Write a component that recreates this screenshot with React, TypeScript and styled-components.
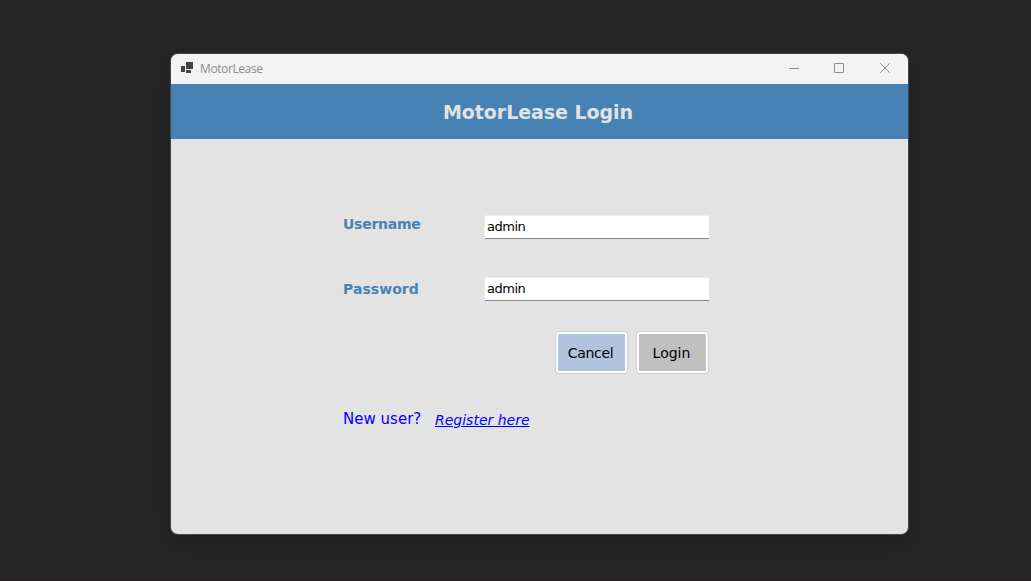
import React from "react";
import styled, { createGlobalStyle } from "styled-components";

const GlobalStyle = createGlobalStyle`
  * { box-sizing: border-box; }
  body {
    margin: 0;
    background: #262626;
    font-family: "DejaVu Sans", Verdana, sans-serif;
  }
`;

const Desktop = styled.div`
  height: 581px;
  padding: 54px 0 0 171px;
  overflow: hidden;
  border-bottom: 1px solid #231e1f;
`;

const Window = styled.main`
  display: flex;
  flex-direction: column;
  width: 737px;
  height: 480px;
  border-radius: 7px;
  overflow: hidden;
  background: #e3e3e3;
  box-shadow: 0 0 0 1px #454746, 0 8px 28px 2px rgba(0, 0, 0, 0.2);
`;

const TitleBar = styled.header`
  display: flex;
  align-items: center;
  height: 30px;
  padding-left: 10px;
  background: #f3f3f3;
`;

const AppIcon = styled.svg`
  width: 12px;
  height: 11px;
  margin: -3px 7px 0 0;
`;

const WindowName = styled.span`
  flex: 1;
  font: 12px/16px "Open Sans", "Noto Sans", sans-serif;
  letter-spacing: -0.4px;
  color: #8c8c8c;
`;

const Controls = styled.div`
  display: flex;
`;

const Control = styled.button`
  display: flex;
  align-items: center;
  justify-content: center;
  width: 46px;
  height: 28px;
  padding: 0;
  border: 0;
  background: none;
`;

const Glyph = styled.svg`
  width: 10px;
  height: 10px;
  margin-top: -2px;
  overflow: visible;
  fill: none;
  stroke: #8c8c8c;
`;

const Banner = styled.div`
  height: 55px;
  background: #4682b4;
`;

const Heading = styled.h1`
  margin: 0;
  padding: 1px 0 0 272px;
  font-size: 19px;
  line-height: 55px;
  letter-spacing: -0.06px;
  color: #e2e2e2;
  white-space: nowrap;
`;

const Form = styled.form`
  display: flex;
  flex-direction: column;
  width: 538px;
  padding: 76px 0 0 172px;
`;

const Field = styled.div`
  display: flex;
  align-items: flex-start;
  height: 62px;
`;

const Label = styled.label<{ $drop: number; $tracking: number }>`
  width: 142px;
  padding-top: ${(p) => p.$drop}px;
  font-size: 14px;
  line-height: 18px;
  font-weight: bold;
  letter-spacing: ${(p) => p.$tracking}px;
  color: #4682b4;
`;

const Input = styled.input`
  width: 224px;
  height: 24px;
  margin: 0;
  padding: 0 2px 1px;
  border: 0;
  border-top: 1px solid #ececec;
  border-bottom: 1px solid #868686;
  box-shadow: -1px 0 0 #ececec;
  outline: none;
  background: #fff;
  font: 13px "DejaVu Sans", Tahoma, sans-serif;
  letter-spacing: -0.5px;
  color: #000;
`;

const Actions = styled.div`
  display: flex;
  justify-content: flex-end;
  gap: 10px;
  margin: -7px 1px 0 0;
`;

const ActionButton = styled.button<{ $fill: string; $tracking: number }>`
  width: 71px;
  height: 41px;
  padding: 0 2px 0 0;
  border: 2px solid #fdfdfd;
  border-radius: 3px;
  background: ${(p) => p.$fill};
  box-shadow: 0 0 0 1px #d2d2d2, 0 1px 0 0 #bdbdbd;
  font: 14px "DejaVu Sans", Verdana, sans-serif;
  letter-spacing: ${(p) => p.$tracking}px;
  color: #000;
`;

const SignUp = styled.div`
  display: flex;
  align-items: flex-start;
  gap: 14px;
  margin-top: 37px;
  font-size: 14px;
  line-height: 18px;
  color: #0000ff;
  white-space: nowrap;
`;

const Prompt = styled.span`
  width: 78px;
  font-size: 15px;
  letter-spacing: 0.02px;
`;

const RegisterLink = styled.a`
  padding-top: 1px;
  color: #0000ff;
  font-style: italic;
  text-decoration: underline;
`;

export default function App() {
  return (
    <>
      <GlobalStyle />
      <Desktop>
        <Window>
          <TitleBar>
            <AppIcon viewBox="0 0 12 11" fill="#434343" shapeRendering="crispEdges">
              <path d="M5 0h7v7H5zM0 4h4v6H0zM5 8h5v3H5z" />
            </AppIcon>
            <WindowName>MotorLease</WindowName>
            <Controls>
              <Control type="button" aria-label="Minimize">
                <Glyph viewBox="0 0 10 10"><path d="M1 5.5h10" /></Glyph>
              </Control>
              <Control type="button" aria-label="Maximize">
                <Glyph viewBox="0 0 10 10"><rect x=".5" y=".5" width="9" height="9" rx=".4" /></Glyph>
              </Control>
              <Control type="button" aria-label="Close">
                <Glyph viewBox="0 0 10 10"><path d="M.2.2l9.6 9.6M9.8.2L.2 9.8" /></Glyph>
              </Control>
            </Controls>
          </TitleBar>
          <Banner>
            <Heading>MotorLease Login</Heading>
          </Banner>
          <Form>
            <Field>
              <Label htmlFor="username" $drop={0} $tracking={-0.25}>Username</Label>
              <Input id="username" defaultValue="admin" />
            </Field>
            <Field>
              <Label htmlFor="password" $drop={3} $tracking={0.05}>Password</Label>
              <Input id="password" defaultValue="admin" />
            </Field>
            <Actions>
              <ActionButton type="button" $fill="#b0c4de" $tracking={-0.3}>Cancel</ActionButton>
              <ActionButton type="button" $fill="#c0c0c0" $tracking={0}>Login</ActionButton>
            </Actions>
            <SignUp>
              <Prompt>New user?</Prompt>
              <RegisterLink>Register here</RegisterLink>
            </SignUp>
          </Form>
        </Window>
      </Desktop>
    </>
  );
}
